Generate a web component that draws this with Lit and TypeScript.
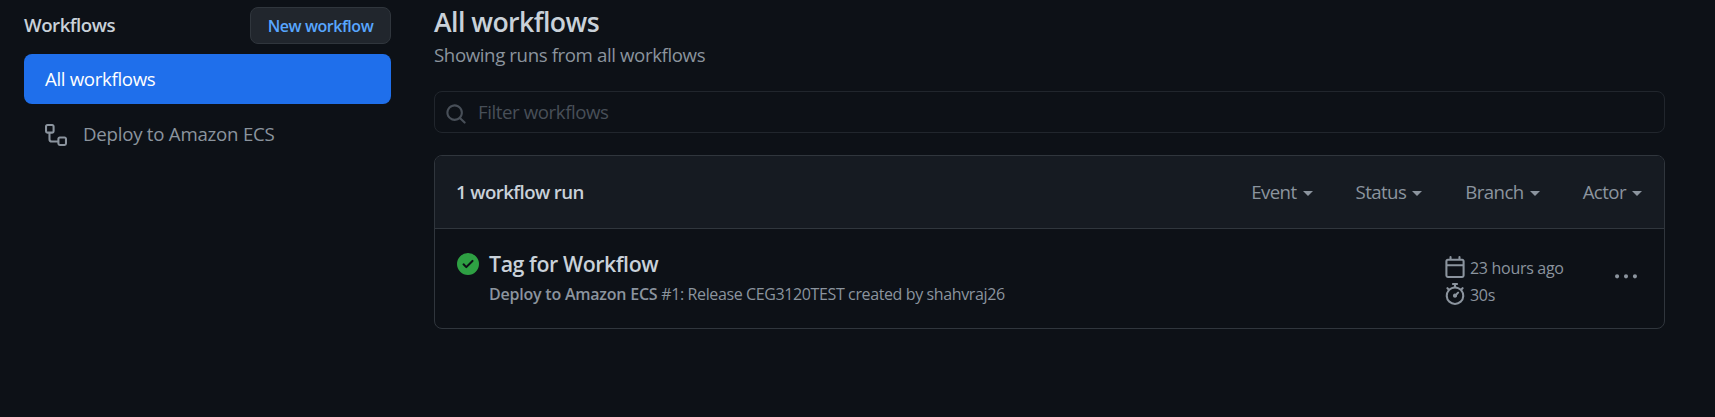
import { LitElement, html, css, svg } from "lit";
import { customElement } from "lit/decorators.js";

const icons = {
  workflow: svg`<path d="M1.75 0h3.5C6.216 0 7 .784 7 1.75v3.5A1.75 1.75 0 015.25 7H4v4a1 1 0 001 1h4v-1.25C9 9.784 9.784 9 10.75 9h3.5c.966 0 1.75.784 1.75 1.75v3.5A1.75 1.75 0 0114.25 16h-3.5A1.75 1.75 0 019 14.25v-.75H5A2.5 2.5 0 012.5 11V7h-.75A1.75 1.75 0 010 5.25v-3.5C0 .784.784 0 1.75 0zm0 1.5a.25.25 0 00-.25.25v3.5c0 .138.112.25.25.25h3.5a.25.25 0 00.25-.25v-3.5a.25.25 0 00-.25-.25h-3.5zm9 9a.25.25 0 00-.25.25v3.5c0 .138.112.25.25.25h3.5a.25.25 0 00.25-.25v-3.5a.25.25 0 00-.25-.25h-3.5z"/>`,
  search: svg`<path d="M11.5 7a4.499 4.499 0 11-8.998 0A4.499 4.499 0 0111.5 7zm-.82 4.74a6 6 0 111.06-1.06l3.04 3.04a.75.75 0 11-1.06 1.06l-3.04-3.04z"/>`,
  check: svg`<path d="M8 16A8 8 0 108 0a8 8 0 000 16zm3.78-9.72a.75.75 0 00-1.06-1.06L6.75 9.19 5.28 7.72a.75.75 0 00-1.06 1.06l2 2a.75.75 0 001.06 0l4.5-4.5z"/>`,
  calendar: svg`<path d="M4.75 0a.75.75 0 01.75.75V2h5V.75a.75.75 0 011.5 0V2h1.25c.966 0 1.75.784 1.75 1.75v10.5A1.75 1.75 0 0113.25 16H2.75A1.75 1.75 0 011 14.25V3.75C1 2.784 1.784 2 2.75 2H4V.75A.75.75 0 014.75 0zm0 3.5h-2a.25.25 0 00-.25.25V6h11V3.75a.25.25 0 00-.25-.25h-8.5zM2.5 7.5v6.75c0 .138.112.25.25.25h10.5a.25.25 0 00.25-.25V7.5h-11z"/>`,
  stopwatch: svg`<path d="M5.75.75A.75.75 0 016.5 0h3a.75.75 0 010 1.5h-.75v1l-.001.041a6.718 6.718 0 013.464 1.435l.007-.006.75-.75a.75.75 0 111.06 1.06l-.75.75-.006.007a6.75 6.75 0 11-10.548 0L2.72 5.03l-.75-.75a.75.75 0 011.06-1.06l.75.75.007.006A6.718 6.718 0 017.25 2.541V1.5H6.5a.75.75 0 01-.75-.75zM8 14.5A5.25 5.25 0 108 4a5.25 5.25 0 000 10.5zm.389-6.7l1.33-1.33a.75.75 0 111.061 1.06L9.45 8.861A1.502 1.502 0 018 10.75a1.5 1.5 0 11.389-2.95z"/>`,
  kebab: svg`<path d="M8 9a1.5 1.5 0 100-3 1.5 1.5 0 000 3zM1.5 9a1.5 1.5 0 100-3 1.5 1.5 0 000 3zm13 0a1.5 1.5 0 100-3 1.5 1.5 0 000 3z"/>`,
};

const icon = (name: keyof typeof icons) =>
  html`<svg class="icon ${name}" viewBox="0 0 16 16" fill="currentColor" fill-rule="evenodd" aria-hidden="true">${icons[name]}</svg>`;

@customElement("app-root")
export class AppRoot extends LitElement {
  static styles = css`
    :host {
      display: flex;
      box-sizing: border-box;
      height: 417px;
      overflow: hidden;
      padding: 0 50px 0 24px;
      background: #0d1117;
      color: #c9d1d9;
      font-family: "Open Sans", "Noto Sans", sans-serif;
      font-size: 18.67px;
      letter-spacing: -0.42px;
      white-space: nowrap;
    }
    h1, h2, p { margin: 0; }
    .icon { display: block; flex: none; width: 22px; height: 22px; }
    .sidebar { flex: none; width: 367px; margin-right: 43px; padding-top: 7px; }
    .top { display: flex; justify-content: space-between; height: 37px; margin-bottom: 10px; }
    .heading { font-size: 18.67px; font-weight: 600; line-height: 36px; letter-spacing: -0.48px; }
    .new {
      box-sizing: border-box;
      width: 141px;
      padding: 0;
      border: 1px solid #30363d;
      border-radius: 8px;
      background: #21262d;
      color: #58a6ff;
      font: 600 16px/34px "Open Sans", "Noto Sans", sans-serif;
      letter-spacing: -0.44px;
      text-align: center;
    }
    .item { display: flex; align-items: center; box-sizing: border-box; height: 50px; padding: 0 0 2px 21px; border-radius: 8px; }
    .item.active { background: #1f6feb; color: #fff; letter-spacing: -0.33px; margin-bottom: 5px; }
    .item.link { color: #8b949e; gap: 16px; letter-spacing: -0.24px; }
    .workflow { margin-top: 4px; }
    .main { flex: 1; min-width: 0; padding-top: 3px; }
    .title { font-size: 26.67px; font-weight: 600; line-height: 38px; letter-spacing: -0.55px; }
    .sub { color: #8b949e; line-height: 28px; letter-spacing: -0.39px; }
    .search-box {
      display: flex;
      align-items: center;
      box-sizing: border-box;
      height: 42px;
      margin: 22px 0;
      padding: 0 0 2px 10px;
      gap: 11px;
      border: 1px solid #21262d;
      border-radius: 8px;
      color: #484f58;
    }
    .search { margin-top: 5px; }
    .runs { border: 1px solid #30363d; border-radius: 8px; overflow: hidden; }
    .runs-head {
      display: flex;
      align-items: center;
      justify-content: space-between;
      box-sizing: border-box;
      height: 73px;
      padding: 0 22px 2px 21px;
      border-bottom: 1px solid #30363d;
      background: #161b22;
    }
    .count { font-weight: 600; letter-spacing: -0.58px; }
    .filters { display: flex; gap: 43px; color: #8b949e; letter-spacing: -0.58px; }
    .filter { display: flex; align-items: center; gap: 6px; }
    .filter::after {
      content: "";
      margin-top: 5px;
      border: 5.5px solid transparent;
      border-top-color: currentColor;
      border-bottom: 0;
    }
    .run { display: flex; height: 99px; box-sizing: border-box; padding: 20px 27px 0 22px; color: #8b949e; }
    .check { color: #2ea043; margin: 4px 10px 0 0; }
    .info { flex: 1; }
    .name {
      color: #c9d1d9;
      font-size: 21.33px;
      font-weight: 600;
      line-height: 29px;
      letter-spacing: -0.42px;
    }
    .detail { font-size: 16px; line-height: 33px; letter-spacing: -0.38px; }
    .detail b { font-weight: 600; letter-spacing: -0.22px; }
    .meta { width: 171px; padding-top: 5px; font-size: 16px; letter-spacing: -0.3px; }
    .meta-row { display: flex; align-items: center; gap: 4px; height: 27px; }
    .meta .icon { margin-bottom: 1px; }
    .kebab { margin-top: 17px; }
  `;

  render() {
    return html`
      <aside class="sidebar">
        <div class="top">
          <h2 class="heading">Workflows</h2>
          <button class="new">New workflow</button>
        </div>
        <div class="item active">All workflows</div>
        <div class="item link">${icon("workflow")}<span>Deploy to Amazon ECS</span></div>
      </aside>
      <main class="main">
        <h1 class="title">All workflows</h1>
        <p class="sub">Showing runs from all workflows</p>
        <div class="search-box">${icon("search")}<span>Filter workflows</span></div>
        <section class="runs">
          <div class="runs-head">
            <span class="count">1 workflow run</span>
            <div class="filters">
              ${["Event", "Status", "Branch", "Actor"].map((f) => html`<span class="filter">${f}</span>`)}
            </div>
          </div>
          <div class="run">
            ${icon("check")}
            <div class="info">
              <div class="name">Tag for Workflow</div>
              <div class="detail"><b>Deploy to Amazon ECS</b> #1: Release CEG3120TEST created by shahvraj26</div>
            </div>
            <div class="meta">
              <div class="meta-row">${icon("calendar")}<span>23 hours ago</span></div>
              <div class="meta-row">${icon("stopwatch")}<span>30s</span></div>
            </div>
            ${icon("kebab")}
          </div>
        </section>
      </main>
    `;
  }
}
